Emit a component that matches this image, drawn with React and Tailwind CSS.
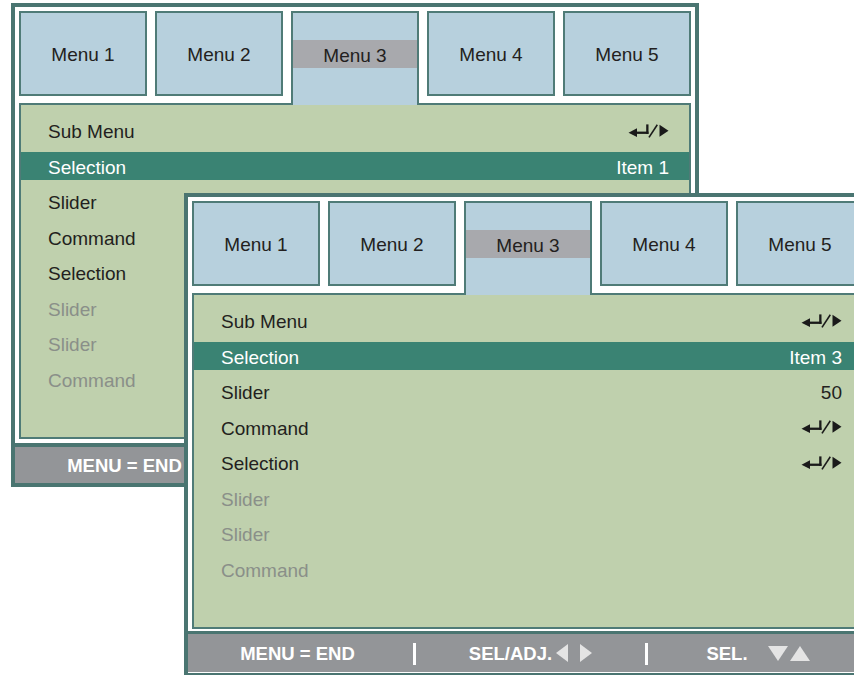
import React from "react";

const font = { fontFamily: '"Liberation Sans", Arial, Helvetica, sans-serif' };

function EnterIcon() {
  return (
    <svg width="41" height="14" viewBox="0 0 40 14" className="block">
      <polygon points="0,8.7 8.5,4.3 8.5,13.1" fill="#1a1a1a" />
      <rect x="7" y="7.6" width="13" height="2.3" fill="#1a1a1a" />
      <rect x="17.7" y="0.4" width="2.3" height="9.5" fill="#1a1a1a" />
      <line x1="20.5" y1="13.4" x2="28.8" y2="0.8" stroke="#1a1a1a" strokeWidth="1.6" />
      <polygon points="31,0.8 40,6.8 31,12.8" fill="#1a1a1a" />
    </svg>
  );
}

function Tab({ label, active }) {
  if (active) {
    return (
      <div className="flex-1 h-[94px] border-2 border-b-0 border-[#4f7b77] bg-[#b7d0dd]">
        <div className="mt-[27px] h-[28px] pt-[2px] bg-[#a8a9ad] flex items-center justify-center text-[19px] leading-none text-[#231f20]">
          {label}
        </div>
      </div>
    );
  }
  return (
    <div className="flex-1 h-[85px] pt-[2px] border-2 border-[#4f7b77] bg-[#b7d0dd] flex items-center justify-center text-[19px] leading-none text-[#231f20]">
      {label}
    </div>
  );
}

function Row({ label, right, selected, disabled }) {
  const color = selected
    ? "bg-[#3a8373] text-white"
    : disabled
    ? "text-[#8a8f89]"
    : "text-[#231f20]";
  return (
    <div className={`h-[28px] pt-[3px] flex items-center justify-between pl-[27px] pr-[20px] text-[19px] leading-none ${color}`}>
      <span>{label}</span>
      {right === "icon" ? (
        <span className="mt-[-2px]">
          <EnterIcon />
        </span>
      ) : right ? (
        <span>{right}</span>
      ) : null}
    </div>
  );
}

function Footer({ h }) {
  return (
    <div className={`${h} pt-[2px] bg-[#939598] flex items-center text-white font-bold text-[18.5px] leading-none`}>
      <div className="w-[225px] flex justify-center">
        <span className="ml-[-6px]">MENU = END</span>
      </div>
      <div className="w-[3px] h-[22px] bg-white" />
      <div className="w-[229px] flex justify-center items-center">
        <span>SEL/ADJ.</span>
        <svg width="12" height="18" viewBox="0 0 12 18" className="ml-[4px] mt-[-2px]">
          <polygon points="12,0 0,9 12,18" fill="#e4e4e4" />
        </svg>
        <svg width="12" height="18" viewBox="0 0 12 18" className="ml-[12px] mt-[-2px]">
          <polygon points="0,0 12,9 0,18" fill="#e4e4e4" />
        </svg>
      </div>
      <div className="w-[3px] h-[22px] bg-white" />
      <div className="flex-1 flex justify-center items-center">
        <span>SEL.</span>
        <svg width="20" height="15" viewBox="0 0 20 15" className="ml-[20px] mt-[-2px]">
          <polygon points="0,0 20,0 10,15" fill="#e4e4e4" />
        </svg>
        <svg width="20" height="15" viewBox="0 0 20 15" className="ml-[2px] mt-[-2px]">
          <polygon points="0,15 20,15 10,0" fill="#e4e4e4" />
        </svg>
      </div>
    </div>
  );
}

function Window({ item, showValues, second }) {
  return (
    <div className="w-[688px] h-[484px] border-4 border-[#4a7571] bg-white flex flex-col">
      <div className="p-1 pb-0">
        <div className="relative z-10 h-[85px] flex items-start gap-2">
          <Tab label="Menu 1" />
          <Tab label="Menu 2" />
          <Tab label="Menu 3" active />
          <Tab label="Menu 4" />
          <Tab label="Menu 5" />
        </div>
        <div className="mt-[7px] h-[336px] border-2 border-[#4f7b77] bg-[#bfd0ad] pt-[11px] flex flex-col gap-[7.57px]">
          <Row label="Sub Menu" right="icon" />
          <Row label="Selection" right={item} selected />
          <Row label="Slider" right={showValues ? "50" : null} />
          <Row label="Command" right={showValues ? "icon" : null} />
          <Row label="Selection" right={showValues ? "icon" : null} />
          <Row label="Slider" disabled />
          <Row label="Slider" disabled />
          <Row label="Command" disabled />
        </div>
      </div>
      <div className={second ? "h-[2px]" : "h-[4px]"} />
      <div className={`${second ? "h-[3px]" : "h-[4px]"} bg-[#4a7571]`} />
      <Footer h={second ? "h-[38px]" : "h-[36px]"} />
    </div>
  );
}

export default function App() {
  return (
    <div className="relative w-[854px] h-[675px] overflow-hidden bg-white" style={font}>
      <div className="absolute left-[11px] top-[3px]">
        <Window item="Item 1" showValues={false} />
      </div>
      <div className="absolute left-[184px] top-[193px]">
        <Window item="Item 3" showValues second />
      </div>
    </div>
  );
}
